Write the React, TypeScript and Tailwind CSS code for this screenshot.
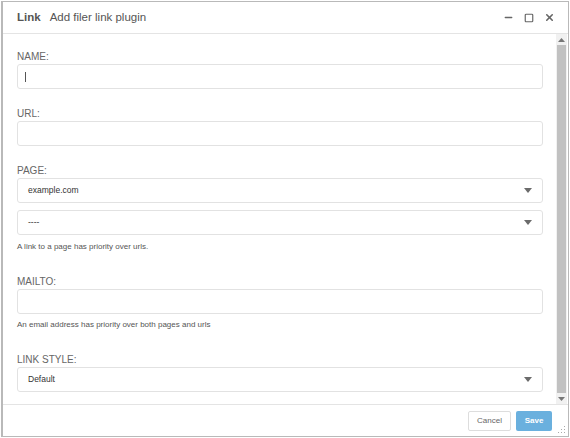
import { Minus, Square, X } from 'lucide-react';

const Caret = () => (
  <svg width="8" height="5" viewBox="0 0 8 5" className="text-[#6b6b6b]">
    <path d="M0 0h8L4 5z" fill="currentColor" />
  </svg>
);

const Label = ({ children }: { children: React.ReactNode }) => (
  <div className="text-[10px] leading-[12px] text-[#666] mb-px">{children}</div>
);

const Input = ({ caret }: { caret?: boolean }) => (
  <div className="h-[25px] border border-[#e2e2e2] rounded-[3px] bg-white flex items-center px-[7px]">
    {caret && <span className="w-px h-[10px] bg-[#555]" />}
  </div>
);

const Select = ({ value }: { value: string }) => (
  <div className="h-[25px] border border-[#e2e2e2] rounded-[3px] bg-white flex items-center justify-between pl-[10px] pr-[10px] text-[8.5px] text-[#333]">
    <span>{value}</span>
    <Caret />
  </div>
);

const Help = ({ children, className }: { children: React.ReactNode; className: string }) => (
  <div className={`text-[8px] leading-[10px] text-[#555] ${className}`}>{children}</div>
);

export default function App() {
  return (
    <div className="w-[570px] h-[438px] bg-white p-px" style={{ fontFamily: '"Liberation Sans", Arial, sans-serif' }}>
      <div className="h-full border border-[#b9b9b9] border-l-2 flex flex-col">
        <div className="h-[32px] shrink-0 border-b border-[#e4e4e4] flex items-center pl-[14px] pr-[13px] text-[11.5px] text-[#555]">
          <span className="font-bold">Link</span>
          <span className="ml-[9px]">Add filer link plugin</span>
          <div className="ml-auto flex items-center gap-[10px] text-[#666]">
            <Minus size={11} strokeWidth={3} />
            <Square size={10} strokeWidth={2.8} />
            <X size={11} strokeWidth={3.5} />
          </div>
        </div>

        <div className="flex-1 flex min-h-0 overflow-hidden">
          <div className="flex-1 pl-[14px] pr-[13px] pt-[17px]">
            <Label>NAME:</Label>
            <Input caret />
            <div className="h-[19px]" />
            <Label>URL:</Label>
            <Input />
            <div className="h-[19px]" />
            <Label>PAGE:</Label>
            <Select value="example.com" />
            <div className="h-[7px]" />
            <Select value="----" />
            <Help className="mt-[7px]">A link to a page has priority over urls.</Help>
            <div className="h-[24px]" />
            <Label>MAILTO:</Label>
            <Input />
            <Help className="mt-[6px]">An email address has priority over both pages and urls</Help>
            <div className="h-[24px]" />
            <Label>LINK STYLE:</Label>
            <Select value="Default" />
          </div>
          <div className="w-[11px] mr-px bg-[#f1f1f1] flex flex-col">
            <div className="h-[11px] flex items-center justify-center">
              <svg width="7" height="4" viewBox="0 0 7 4"><path d="M0 4h7L3.5 0z" fill="#777" /></svg>
            </div>
            <div className="flex-1 mx-px bg-[#c1c1c1]" />
            <div className="h-[11px] flex items-center justify-center">
              <svg width="7" height="4" viewBox="0 0 7 4"><path d="M0 0h7L3.5 4z" fill="#777" /></svg>
            </div>
          </div>
        </div>

        <div className="h-[32px] shrink-0 border-t border-[#e4e4e4] flex items-center justify-end pr-[16px] gap-[5px] relative">
          <div className="h-[20px] w-[43px] border border-[#ddd] rounded-[2px] bg-white text-[8px] text-[#666] flex items-center justify-center">Cancel</div>
          <div className="h-[20px] w-[36px] rounded-[2px] bg-[#6ab0de] text-[8px] font-bold text-white flex items-center justify-center">Save</div>
          <svg width="8" height="8" viewBox="0 0 8 8" className="absolute right-[2px] bottom-[2px]">
            <g fill="#aaa">
              <rect x="6" y="0" width="1" height="1" />
              <rect x="3" y="3" width="1" height="1" />
              <rect x="6" y="3" width="1" height="1" />
              <rect x="0" y="6" width="1" height="1" />
              <rect x="3" y="6" width="1" height="1" />
              <rect x="6" y="6" width="1" height="1" />
            </g>
          </svg>
        </div>
      </div>
    </div>
  );
}
